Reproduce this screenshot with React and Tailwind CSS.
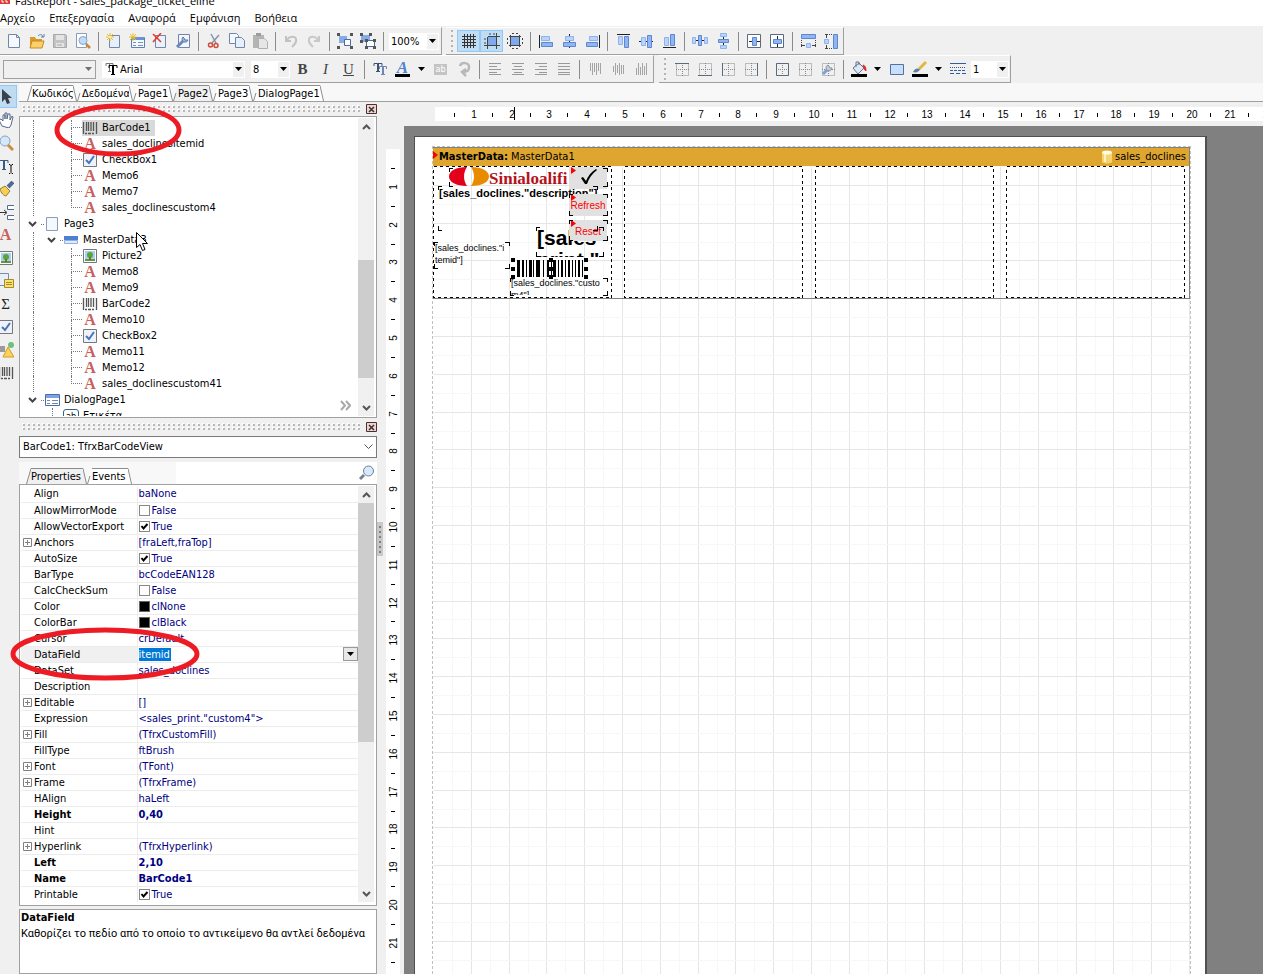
import React from 'react';
import clsx from 'clsx';

const line = '#5a6b80';

// 16x16 toolbar drawings
const icons = {
  file: (
    <path d="M2.5 1.5h8l3 3v10h-11z M10.500 1.500v3h3" fill="#f4f8ff" stroke="#7486a6" />
  ),
  open: (
    <>
      <path d="M1 4h5l1 2h6v9H1z" fill="#d99a2b" />
      <path d="M3 8h12l-2 7H1z" fill="#fbd06a" stroke="#c98a1d" />
      <path d="M9 3c2-2 4-2 5 1m1-3v3h-3" fill="none" stroke="#5e7fa8" />
    </>
  ),
  save: (
    <>
      <path d="M1.500 1.500h12l1 1v12h-13z" fill="#c4c4c4" stroke="#a8a8a8" />
      <path d="M4 2h8v5H4zM4 10h8v4H4z" fill="#e4e4e4" />
      <path d="M5 12h5" stroke="#a8a8a8" />
    </>
  ),
  preview: (
    <>
      <path d="M1.500.5h10v14h-10z" fill="#fff" stroke="#8c9cb8" />
      <circle cx="8" cy="7.500" r="4" fill="#bcdcf8" stroke="#86a7cc" />
      <path d="M11 11l4 4" stroke="#c98740" strokeWidth="2.500" />
    </>
  ),
  newPage: (
    <>
      <path d="M3.500 2.500h10v12h-10z" fill="#e6effd" stroke="#7486a6" />
      <path d="M4 0v8M0 4h8M1 1l6 6M7 1L1 7" stroke="#e8c02a" />
      <circle cx="4" cy="4" r="1.500" fill="#fff08a" />
    </>
  ),
  newDialog: (
    <>
      <path d="M2.500 4.500h13v10h-13z" fill="#f2f7ff" stroke="#5f7fb0" />
      <path d="M3 4h12v3H3z" fill="#6d93cf" />
      <path d="M4 9.500h3M4 12.500h3M9 9.500h5M9 12.500h5" stroke="#7c93b5" />
      <path d="M4 0v8M0 4h8M1 1l6 6M7 1L1 7" stroke="#e8c02a" />
    </>
  ),
  deletePage: (
    <>
      <path d="M3.500 2.500h10v12h-10z" fill="#eaf1fd" stroke="#7486a6" />
      <path d="M1 1l8 8M9 0L1 9" stroke="#e03a2a" strokeWidth="1.500" />
    </>
  ),
  pageSettings: (
    <>
      <path d="M3.500 1.500h11v13h-11z" fill="#f2f7ff" stroke="#7486a6" />
      <path d="M2 14l6-6" stroke="#6a88bd" strokeWidth="3" />
      <path d="M8 4a3 3 0 1 0 5 3l-3 0-1-2z" fill="#9db4dc" stroke="#5b78ab" />
    </>
  ),
  cut: (
    <>
      <path d="M5 1l5 9M13 2L6 10" stroke="#8295ad" strokeWidth="1.500" />
      <circle cx="4.500" cy="12" r="2" fill="none" stroke="#d2493b" strokeWidth="1.500" />
      <circle cx="10" cy="12.500" r="2" fill="none" stroke="#d2493b" strokeWidth="1.500" />
    </>
  ),
  copy: (
    <>
      <path d="M.5.5h7l2 2v8h-9z" fill="#f4f8ff" stroke="#7486a6" />
      <path d="M6.500 4.500h6l3 3v7h-9z" fill="#e6effd" stroke="#7486a6" />
    </>
  ),
  paste: (
    <>
      <path d="M1 2h11v13H1z" fill="#b4b4b4" />
      <path d="M4 0h5v3H4z" fill="#9c9c9c" />
      <path d="M6.500 5.500h6l3 3v7h-9z" fill="#e6e6e6" stroke="#b0b0b0" />
    </>
  ),
  undo: (
    <path d="M3 3v5h5M4 7c2-4 8-4 9-1 1 3-1 5-4 8" fill="none" stroke="#c2c2c2" strokeWidth="2" />
  ),
  redo: (
    <path d="M13 3v5H8M12 7C10 3 4 3 3 6c-1 3 1 5 4 8" fill="none" stroke="#c8c8c8" strokeWidth="2" />
  ),
  group: (
    <>
      <path d="M2 3h8v7H2z" fill="#86abe8" />
      <path d="M7.500 6.500h6v6h-6z" fill="#fff" stroke="#4a6aa0" />
      <path d="M0 0h3v3H0zM13 0h3v3h-3zM0 13h3v3H0zM13 13h3v3h-3z" fill="#555" />
    </>
  ),
  ungroup: (
    <>
      <path d="M1 2h9v7H1z" fill="#86abe8" />
      <path d="M6.500 7.500h8v6h-8z" fill="#fff" stroke="#4a6aa0" />
      <path d="M0 0h3v3H0zM9 0h3v3H9zM0 7h3v3H0zM5 6h3v3H5zM13 6h3v3h-3zM5 13h3v3H5zM13 13h3v3h-3z" fill="#555" />
    </>
  ),
  grid: <path d="M3.500 1v14M6.500 1v14M9.500 1v14M12.500 1v14M1 3.500h14M1 6.500h14M1 9.500h14M1 12.500h14" stroke="#333" />,
  snap: (
    <>
      <path d="M4 4h8v8H4z" fill="#7faaf0" />
      <path d="M3.500 4v12M12.500 0v16M4 3.500h12M0 12.500h16" stroke="#444" />
      <path d="M1 5v7M5 1h6" stroke="#444" strokeDasharray="2 2" />
    </>
  ),
  snapAll: (
    <>
      <path d="M4 4h8v8H4z" fill="#7faaf0" />
      <path d="M3.500 2v12M12.500 2v12M2 3.500h12M2 12.500h12" stroke="#444" />
      <path d="M.5 5v7M5 .5h6M15.500 5v7M5 15.500h6" stroke="#444" strokeDasharray="2 2" />
    </>
  ),
  alignLeft: (
    <>
      <path d="M1.500 2v13" stroke="#222" />
      <path d="M3.500 3.500h8v4h-8z" fill="#b9d3fb" stroke="#8db2ee" />
      <path d="M3.500 9.500h11v4h-11z" fill="#8fb5f5" stroke="#5d87cf" />
    </>
  ),
  alignCenter: (
    <>
      <path d="M8.500 1v14" stroke="#222" />
      <path d="M4.500 3.500h8v4h-8z" fill="#b9d3fb" stroke="#8db2ee" />
      <path d="M2.500 9.500h12v4h-12z" fill="#8fb5f5" stroke="#5d87cf" />
    </>
  ),
  alignRight: (
    <>
      <path d="M15.500 2v13" stroke="#222" />
      <path d="M5.500 3.500h8v4h-8z" fill="#b9d3fb" stroke="#8db2ee" />
      <path d="M2.500 9.500h11v4h-11z" fill="#8fb5f5" stroke="#5d87cf" />
    </>
  ),
  alignTop: (
    <>
      <path d="M2 1.500h13" stroke="#222" />
      <path d="M3.500 3.500h4v8h-4z" fill="#b9d3fb" stroke="#8db2ee" />
      <path d="M9.500 3.500h4v11h-4z" fill="#8fb5f5" stroke="#5d87cf" />
    </>
  ),
  alignMiddle: (
    <>
      <path d="M1 8.500h14" stroke="#222" />
      <path d="M3.500 4.500h4v8h-4z" fill="#b9d3fb" stroke="#8db2ee" />
      <path d="M9.500 2.500h4v12h-4z" fill="#8fb5f5" stroke="#5d87cf" />
    </>
  ),
  alignBottom: (
    <>
      <path d="M2 14.500h13" stroke="#222" />
      <path d="M3.500 4.500h4v8h-4z" fill="#b9d3fb" stroke="#8db2ee" />
      <path d="M9.500 1.500h4v11h-4z" fill="#8fb5f5" stroke="#5d87cf" />
    </>
  ),
  spaceH: (
    <>
      <path d="M0 7.500h16" stroke="#222" />
      <path d="M.5 4.500h3v6h-3zM12.500 4.500h3v6h-3z" fill="#b9d3fb" stroke="#8db2ee" />
      <path d="M6.500 2.500h3v10h-3z" fill="#8fb5f5" stroke="#5d87cf" />
    </>
  ),
  spaceV: (
    <>
      <path d="M8.500 0v16" stroke="#222" />
      <path d="M5.500.5h6v3h-6zM5.500 12.500h6v3h-6z" fill="#b9d3fb" stroke="#8db2ee" />
      <path d="M3.500 6.500h10v3h-10z" fill="#8fb5f5" stroke="#5d87cf" />
    </>
  ),
  centerH: (
    <>
      <path d="M1.500 1.500h13v13h-13z" fill="#fff" stroke={line} />
      <path d="M3 8.500h11" stroke="#222" />
      <path d="M6.500 4.500h4v8h-4z" fill="#8fb5f5" stroke="#5d87cf" />
    </>
  ),
  centerV: (
    <>
      <path d="M1.500 1.500h13v13h-13z" fill="#fff" stroke={line} />
      <path d="M8.500 3v11" stroke="#222" />
      <path d="M4.500 6.500h8v4h-8z" fill="#8fb5f5" stroke="#5d87cf" />
    </>
  ),
  sameWidth: (
    <>
      <path d="M1.500 1.500h14v4h-14z" fill="#8fb5f5" stroke="#5d87cf" />
      <path d="M1.500 7v7M15.500 7v7" stroke="#444" strokeDasharray="1 1" />
      <path d="M1 12.500h4M12 12.500h4" stroke="#444" />
      <path d="M6.500 10.500h4v4h-4z" fill="#b9d3fb" stroke="#8db2ee" />
    </>
  ),
  sameHeight: (
    <>
      <path d="M10.500 1.500h4v14h-4z" fill="#8fb5f5" stroke="#5d87cf" />
      <path d="M2 1.500h7M2 15.500h7" stroke="#444" strokeDasharray="1 1" />
      <path d="M3.500 1v4M3.500 12v4" stroke="#444" />
      <path d="M1.500 6.500h4v4h-4z" fill="#b9d3fb" stroke="#8db2ee" />
    </>
  ),
  rotate: (
    <path d="M4 5c1-4 9-4 9 1 0 4-2 5-6 5m3-3l-4 3 4 4" fill="none" stroke="#b8b8b8" strokeWidth="2.500" />
  ),
  textLeft: <path d="M2 2.500h12M2 5.500h8M2 8.500h12M2 11.500h8M2 13.500h12" stroke="#999" />,
  textCenter: <path d="M2 2.500h12M4 5.500h8M2 8.500h12M4 11.500h8M2 13.500h12" stroke="#999" />,
  textRight: <path d="M2 2.500h12M6 5.500h8M2 8.500h12M6 11.500h8M2 13.500h12" stroke="#999" />,
  textBlock: <path d="M2 2.500h12M2 5.500h12M2 8.500h12M2 11.500h12M2 13.500h12" stroke="#999" />,
  vTop: <path d="M3.500 2v8M5.500 2v12M7.500 2v9M9.500 2v12M11.500 2v8M13.500 2v11" stroke="#a4a4a4" />,
  vMiddle: <path d="M3.500 5v6M5.500 2v12M7.500 4v8M9.500 2v12M11.500 4v9M13.500 4v9" stroke="#a4a4a4" />,
  vBottom: <path d="M3.500 7v7M5.500 2v12M7.500 6v8M9.500 2v12M11.500 5v9M13.500 2v12" stroke="#a4a4a4" />,
  fill: (
    <>
      <path d="M2 7l6-5 5 5-6 6z" fill="#dbe8f8" stroke="#62748c" />
      <path d="M5 6V1h3v3" fill="none" stroke="#62748c" />
      <path d="M12 4c3 1 3 4 3 6l-2-2z" fill="#d8322a" stroke="#d8322a" />
      <path d="M0 13h16v3H0z" fill="#000" />
    </>
  ),
  rect: <path d="M1.500 3.500h13v10h-13z" fill="#c9ddfc" stroke="#51719f" />,
  pen: (
    <>
      <path d="M14 1L7 8" stroke="#e2b93c" strokeWidth="3" />
      <path d="M1 11c2-4 4-4 7-3-1 3-4 4-7 3z" fill="#5e7fa8" />
      <path d="M0 13h16v3H0z" fill="#000" />
    </>
  ),
  lineStyle: (
    <>
      <path d="M0 2.500h16" stroke="#365a9c" />
      <path d="M0 6.500h16" stroke="#365a9c" strokeDasharray="1 1" />
      <path d="M0 9.500h16" stroke="#365a9c" strokeDasharray="3 1" />
      <path d="M0 12.500h16" stroke="#365a9c" strokeDasharray="4 2" />
    </>
  ),
  arrow: <path d="M4 0v13l3-3 2 5 3-1-2-5h4z" fill="#3b3f46" />,
  hand: (
    <path d="M4 14L1 8l2-1 2 2V3h2v4V1h2v6l1-5h2v6l2-4 1 1-2 8-2 3z" fill="#fff" stroke="#55678a" />
  ),
  zoom: (
    <>
      <circle cx="7" cy="6" r="5" fill="#d4e8fb" stroke="#8aa0bb" />
      <path d="M10 10l5 5" stroke="#c98f3c" strokeWidth="3" />
    </>
  ),
  brush: (
    <>
      <path d="M10 6l5-5" stroke="#4d6b95" strokeWidth="4" />
      <path d="M2 8l5-3 5 5-4 5c-2 0-5-3-6-7z" fill="#f1d15a" stroke="#a07a28" />
    </>
  ),
  band: (
    <>
      <path d="M2 8.500h6M6 6l3 2.500L6 11" fill="none" stroke="#333" />
      <path d="M16 1.500H9.500v4H16M16 11.500H9.500v4H16" fill="#fff" stroke="#4d6b95" />
    </>
  ),
  picture: (
    <>
      <path d="M1.500 1.500h13v13h-13z" fill="#fff" stroke="#777" />
      <path d="M3 3h10v10H3z" fill="#a9cdf3" />
      <path d="M3 11h10v2H3z" fill="#5f9e3e" />
      <circle cx="8" cy="7" r="3" fill="#57a639" />
      <path d="M8 9v3" stroke="#7a4f22" strokeWidth="1.500" />
    </>
  ),
  subreport: (
    <>
      <path d="M.5.5h10v12H.5z" fill="#e8effc" stroke="#7d8ba5" />
      <path d="M6.500 6.500h9v8h-9z" fill="#fbe36b" stroke="#a8892c" />
      <path d="M8 9.500h6M8 11.500h6" stroke="#a8892c" />
    </>
  ),
  check: (
    <>
      <path d="M1.500 1.500h13v13h-13z" fill="#eef3fb" stroke="#777" />
      <path d="M4 8l3 3 5-7" fill="none" stroke="#4a72b8" strokeWidth="2" />
    </>
  ),
  shapes: (
    <>
      <path d="M1 4h6v6H1z" fill="#9a9a9a" />
      <circle cx="13" cy="3" r="3" fill="#6fc07b" />
      <path d="M10 5l6 10H5z" fill="#fbd35a" stroke="#d39d22" />
    </>
  ),
  barcode: (
    <path d="M1.500 2v12M4.500 2v9M6.500 2v9M9 2v9M11.500 2v9M14.500 2v12M3 13.500h2M6 13.500h3M10 13.500h2" stroke="#555" strokeWidth="1.300" />
  ),
  page: <path d="M2.500 1.500h11v13h-11z" fill="#f4f8ff" stroke="#8c9cb8" />,
  dataBand: (
    <>
      <path d="M1 4h14v4H1z" fill="#4f7fd0" />
      <path d="M1.500 8.500h13v3h-13z" fill="#dfeafc" stroke="#8fb0e4" />
    </>
  ),
  dialog: (
    <>
      <path d="M1.500 2.500h14v11h-14z" fill="#fff" stroke="#456fae" />
      <path d="M2 3h13v3H2z" fill="#7da3df" />
      <path d="M3 8.500h3M3 11.500h3M8 8.500h6M8 11.500h6" stroke="#7888a4" />
    </>
  ),
};

const frameEdges = {
  top: 'M1 2.500h14',
  bottom: 'M1 14.500h14',
  left: 'M2.500 2v13',
  right: 'M14.500 2v13',
  all: 'M2.500 2.500h12v12h-12z',
  none: '',
};

function Icon({ name }) {
  return (
    <svg width="16" height="16" viewBox="0 0 16 16" fill="none" className="shrink-0">
      {icons[name]}
    </svg>
  );
}

function FrameIcon({ edge, wrench }) {
  return (
    <svg width="16" height="16" viewBox="0 0 16 16" fill="none" className="shrink-0">
      <path d="M2.500 2.500h12v12h-12zM8.500 2v13M2 8.500h13" stroke="#888" strokeDasharray="1 1" />
      <path d={frameEdges[edge]} stroke={line} />
      {wrench && (
        <>
          <path d="M3 13l6-6" stroke="#7d9ddb" strokeWidth="3" />
          <path d="M8 4a3 3 0 1 0 4 3l-2 0-1-2z" fill="#c4ccd8" stroke="#8a94a4" />
        </>
      )}
    </svg>
  );
}

function LetterA() {
  return <span className="w-4 text-center font-['Liberation_Serif',serif] text-[16px] leading-[18px] font-bold text-[#c9605e]">A</span>;
}

function ToolButton({ label, on, children }) {
  return (
    <button
      type="button"
      aria-label={label}
      className={clsx('flex h-[22px] w-[23px] shrink-0 items-center justify-center', on && 'border border-[#90c8f6] bg-[#c0dcf3]')}
    >
      {children}
    </button>
  );
}

function IconButtons({ names, on = [] }) {
  return names.map((name) => (
    <ToolButton key={name} label={name} on={on.includes(name)}>
      <Icon name={name} />
    </ToolButton>
  ));
}

function Separator() {
  return (
    <div className="flex w-2 shrink-0 justify-center">
      <div className="h-[19px] w-px bg-[#8c8c8c]" />
    </div>
  );
}

function DownArrow() {
  return (
    <svg width="7" height="4" viewBox="0 0 7 4" className="shrink-0">
      <path d="M0 0h7L3.500 4z" fill="currentColor" />
    </svg>
  );
}

function DropButton({ label }) {
  return (
    <button type="button" aria-label={label} className="flex h-[22px] w-[15px] shrink-0 items-center justify-center">
      <DownArrow />
    </button>
  );
}

function Combo({ label, value, className, icon }) {
  return (
    <div className={clsx('relative flex h-[17px] shrink-0 items-center bg-white', className)}>
      {icon}
      <select aria-label={label} className="h-full w-full appearance-none bg-transparent pt-px pl-[2px] outline-none">
        <option>{value}</option>
      </select>
      <span className="pointer-events-none absolute inset-y-px right-px flex w-[11px] items-center justify-center bg-[#f0f0f0]">
        <DownArrow />
      </span>
    </div>
  );
}

function Bar({ className, grip, children }) {
  return (
    <div className={clsx('flex h-7 shrink-0 items-center border-t border-r border-b border-t-white border-r-[#a0a0a0] border-b-[#a0a0a0]', className)}>
      {grip && (
        <div className="flex w-[11px] shrink-0 flex-col items-center gap-[3px]">
          {[0, 1, 2, 3, 4].map((i) => (
            <span key={i} className="size-[2px] bg-[#b4b4b4]" />
          ))}
        </div>
      )}
      {children}
    </div>
  );
}

function Toolbars() {
  return (
    <div className="bg-[#f0f0f0] pt-px">
      <div className="flex gap-1">
        <Bar className="w-[442px] pl-[2px]">
          <IconButtons names={['file', 'open', 'save', 'preview']} />
          <Separator />
          <IconButtons names={['newPage', 'newDialog', 'deletePage', 'pageSettings']} />
          <Separator />
          <IconButtons names={['cut', 'copy', 'paste']} />
          <Separator />
          <IconButtons names={['undo', 'redo']} />
          <Separator />
          <IconButtons names={['group', 'ungroup']} />
          <Separator />
          <Combo label="Zoom" value="100%" className="ml-[2px] w-[50px]" />
        </Bar>
        <Bar grip className="w-[398px]">
          <IconButtons names={['grid', 'snap', 'snapAll']} on={['grid', 'snap']} />
          <Separator />
          <IconButtons names={['alignLeft', 'alignCenter', 'alignRight']} />
          <Separator />
          <IconButtons names={['alignTop', 'alignMiddle', 'alignBottom']} />
          <Separator />
          <IconButtons names={['spaceH', 'spaceV']} />
          <Separator />
          <IconButtons names={['centerH', 'centerV']} />
          <Separator />
          <IconButtons names={['sameWidth', 'sameHeight']} />
        </Bar>
      </div>

      <div className="flex gap-[5px]">
        <Bar className="w-[654px] pl-[3px]">
          <div className="relative h-[19px] w-[93px] shrink-0 border border-[#a0a0a0]">
            <select aria-label="Style" disabled className="h-full w-full appearance-none" />
            <span className="pointer-events-none absolute inset-y-0 right-[3px] flex items-center text-[#707070]">
              <DownArrow />
            </span>
          </div>
          <Combo
            label="Font"
            value="Arial"
            className="ml-[6px] w-[143px]"
            icon={
              <svg width="13" height="14" viewBox="0 0 13 14" fill="none" className="ml-[3px] shrink-0">
                <path d="M1 4V1.500h7V4M4.500 2v7M3 9.500h3" stroke="#777" />
                <path d="M4 6V3.500h8V6M6 12.500h4" stroke="#000" />
                <path d="M8 4v8" stroke="#000" strokeWidth="2" />
              </svg>
            }
          />
          <Combo label="Size" value="8" className="ml-[6px] w-[39px]" />
          <div className="ml-px flex font-['Liberation_Serif',serif] text-[15px] text-[#444]">
            <ToolButton label="Bold"><b>B</b></ToolButton>
            <ToolButton label="Italic"><i>I</i></ToolButton>
            <ToolButton label="Underline"><u>U</u></ToolButton>
          </div>
          <Separator />
          <ToolButton label="Font settings">
            <svg width="14" height="14" viewBox="0 0 14 14" fill="none">
              <path d="M1 4V1.500h8V4M3 9.500h4" stroke="#3a5378" />
              <path d="M5 2v8" stroke="#3a5378" strokeWidth="2" />
              <path d="M6.500 7V4.500h7V7M8 12.500h4" stroke="#6d86b4" />
              <path d="M10 5v8" stroke="#6d86b4" strokeWidth="2" />
            </svg>
          </ToolButton>
          <ToolButton label="Font color">
            <span className="w-[15px] border-b-3 border-black text-center font-['Liberation_Serif',serif] text-[17px] leading-[13px] font-bold text-[#4e83d2] italic">A</span>
          </ToolButton>
          <DropButton label="Font color list" />
          <ToolButton label="Highlight">
            <span className="h-[11px] w-[13px] bg-[#c4c4c4] text-center text-[9px] leading-[10px] text-white">ab</span>
          </ToolButton>
          <IconButtons names={['rotate']} />
          <Separator />
          <IconButtons names={['textLeft', 'textCenter', 'textRight', 'textBlock']} />
          <Separator />
          <IconButtons names={['vTop', 'vMiddle', 'vBottom']} />
        </Bar>
        <Bar grip className="w-[352px]">
          {['top', 'bottom', 'left', 'right'].map((edge) => (
            <ToolButton key={edge} label={edge}><FrameIcon edge={edge} /></ToolButton>
          ))}
          <Separator />
          <ToolButton label="All lines"><FrameIcon edge="all" /></ToolButton>
          <ToolButton label="No lines"><FrameIcon edge="none" /></ToolButton>
          <ToolButton label="Edit frame"><FrameIcon edge="none" wrench /></ToolButton>
          <Separator />
          <IconButtons names={['fill']} />
          <DropButton label="Fill color list" />
          <IconButtons names={['rect', 'pen']} />
          <DropButton label="Line color list" />
          <IconButtons names={['lineStyle']} />
          <Combo label="Line width" value="1" className="ml-[2px] w-[38px]" />
        </Bar>
      </div>
    </div>
  );
}

function Tab({ label, active, first, width }) {
  const fill = active ? '#f0f0f0' : '#fff';
  return (
    <button type="button" className="flex h-4 shrink-0">
      <svg width="5" height="16" viewBox="0 0 5 16">
        <path d="M0 16L5 0v16z" fill={fill} />
        <path d={first ? 'M.5 16L5 .5' : 'M.5 16L3 8'} stroke="#8c8c8c" fill="none" />
      </svg>
      <span className={clsx('border-t border-[#8c8c8c] text-left leading-4 whitespace-nowrap', width, active ? 'bg-[#f0f0f0]' : 'bg-white')}>
        {label}
      </span>
      <svg width="4" height="16" viewBox="0 0 4 16">
        <path d="M0 0l4 16H0z" fill={fill} />
        <path d="M0 .5L3.500 16" stroke="#8c8c8c" fill="none" />
      </svg>
    </button>
  );
}

function Tools() {
  return (
    <div className="flex w-[17px] shrink-0 flex-col items-end overflow-hidden pt-[2px]">
      {['arrow', 'hand', 'zoom', 'text', 'brush', 'band', 'memo', 'picture', 'subreport', 'sum', 'check', 'shapes', 'barcode'].map((name) => (
        <button
          key={name}
          type="button"
          aria-label={name}
          className={clsx('flex h-[23px] w-[23px] shrink-0 items-center justify-center', name === 'arrow' && 'border border-[#90c8f6] bg-[#c0dcf3]')}
        >
          {name === 'text' && (
            <svg width="16" height="16" viewBox="0 0 16 16" fill="none">
              <path d="M1 5V2.500h9V5M4 11.500h4" stroke="#2f6088" />
              <path d="M6 3v9" stroke="#2f6088" strokeWidth="2" />
              <path d="M11 6.500h1l1 1 1-1h1M13 7v7M11 15.500h1l1-1 1 1h1" stroke="#000" />
            </svg>
          )}
          {name === 'memo' && <LetterA />}
          {name === 'sum' && <span className="font-['Liberation_Serif',serif] text-[15px] leading-4 text-[#222]">Σ</span>}
          {icons[name] && <Icon name={name} />}
        </button>
      ))}
    </div>
  );
}

function PanelGrip({ className, id }) {
  return (
    <div className={clsx('flex shrink-0 items-center justify-between pl-[3px]', className)}>
      <svg width="340" height="8" shapeRendering="crispEdges">
        <pattern id={id} width="5" height="4" patternUnits="userSpaceOnUse">
          <path d="M1 1h2v2H1z" fill="#b8b8b8" />
          <path d="M0 0h2v1H1v1H0z" fill="#fff" />
        </pattern>
        <rect width="340" height="8" fill={`url(#${id})`} />
      </svg>
      <button type="button" aria-label="Close" className="flex">
        <svg width="11" height="10" viewBox="0 0 11 10">
          <path d="M.5.5h10v9H.5z" fill="#f3d3cf" stroke="#4a3030" />
          <path d="M3 3l5 5M8 3L3 8" stroke="#333" strokeWidth="1.500" />
        </svg>
      </button>
    </div>
  );
}

function Chevron({ up, className }) {
  return (
    <svg width="9" height="6" viewBox="0 0 9 6" fill="none" className={className}>
      <path d={up ? 'M1 5l3.500-3.500L8 5' : 'M1 1l3.500 3.500L8 1'} stroke="currentColor" strokeWidth="2" />
    </svg>
  );
}

function ScrollBar({ thumb }) {
  return (
    <div className="flex w-4 shrink-0 flex-col bg-[#f0f0f0] text-[#555]">
      <button type="button" aria-label="Scroll up" className="flex h-[17px] items-center justify-center"><Chevron up /></button>
      <div className="min-h-0 flex-1">
        <div className={clsx('bg-[#cdcdcd]', thumb)} />
      </div>
      <button type="button" aria-label="Scroll down" className="flex h-[17px] items-center justify-center"><Chevron /></button>
    </div>
  );
}

const tree = [
  { label: 'BarCode1', icon: 'barcode', selected: true },
  { label: 'sales_doclinesitemid', icon: 'memo' },
  { label: 'CheckBox1', icon: 'check' },
  { label: 'Memo6', icon: 'memo' },
  { label: 'Memo7', icon: 'memo' },
  { label: 'sales_doclinescustom4', icon: 'memo', last: true },
  { label: 'Page3', icon: 'page', level: 0 },
  { label: 'MasterData3', icon: 'dataBand', level: 1 },
  { label: 'Picture2', icon: 'picture' },
  { label: 'Memo8', icon: 'memo' },
  { label: 'Memo9', icon: 'memo' },
  { label: 'BarCode2', icon: 'barcode' },
  { label: 'Memo10', icon: 'memo' },
  { label: 'CheckBox2', icon: 'check' },
  { label: 'Memo11', icon: 'memo' },
  { label: 'Memo12', icon: 'memo' },
  { label: 'sales_doclinescustom41', icon: 'memo', last: true },
  { label: 'DialogPage1', icon: 'dialog', level: 0 },
  { label: 'Ετικέτα', icon: 'label', level: 3 },
];

function TreeRow({ label, icon, level = 2, last, selected }) {
  return (
    <li className="flex h-4 items-center">
      {level === 2 && (
        <>
          <span className="ml-3 h-4 w-[38px] border-l border-dotted border-[#777]" />
          <span className="flex h-4 w-[11px] flex-col">
            <span className="h-2 border-b border-l border-dotted border-[#777]" />
            {!last && <span className="h-2 border-l border-dotted border-[#777]" />}
          </span>
        </>
      )}
      {level === 0 && (
        <>
          <Chevron className="ml-[7px] text-[#444]" />
          <span className="ml-1 w-[3px] border-b border-dotted border-[#777]" />
        </>
      )}
      {level === 1 && (
        <>
          <span className="ml-3 h-4 w-[14px] border-l border-dotted border-[#777]" />
          <Chevron className="text-[#444]" />
          <span className="ml-[4px] w-[3px] border-b border-dotted border-[#777]" />
        </>
      )}
      {level === 3 && <span className="ml-[31px] h-4 w-[11px] border-l border-dotted border-[#777]" />}
      <span className={clsx('flex h-4 items-center', selected && 'bg-[#d9d9d9]')}>
        {icon === 'memo' && <LetterA />}
        {icon === 'label' && (
          <span className="h-[14px] w-4 rounded-[3px] border border-[#35618e] text-center text-[9px] leading-3">ab</span>
        )}
        {icons[icon] && <Icon name={icon} />}
        <span className="px-1 whitespace-nowrap">{label}</span>
      </span>
    </li>
  );
}

const props = [
  { name: 'Align', value: 'baNone' },
  { name: 'AllowMirrorMode', value: 'False', check: false },
  { name: 'AllowVectorExport', value: 'True', check: true },
  { name: 'Anchors', value: '[fraLeft,fraTop]', group: true },
  { name: 'AutoSize', value: 'True', check: true },
  { name: 'BarType', value: 'bcCodeEAN128' },
  { name: 'CalcCheckSum', value: 'False', check: false },
  { name: 'Color', value: 'clNone', swatch: true },
  { name: 'ColorBar', value: 'clBlack', swatch: true },
  { name: 'Cursor', value: 'crDefault' },
  { name: 'DataField', value: 'itemid', editing: true },
  { name: 'DataSet', value: 'sales_doclines' },
  { name: 'Description', value: '' },
  { name: 'Editable', value: '[]', group: true },
  { name: 'Expression', value: '<sales_print."custom4">' },
  { name: 'Fill', value: '(TfrxCustomFill)', group: true },
  { name: 'FillType', value: 'ftBrush' },
  { name: 'Font', value: '(TFont)', group: true },
  { name: 'Frame', value: '(TfrxFrame)', group: true },
  { name: 'HAlign', value: 'haLeft' },
  { name: 'Height', value: '0,40', bold: true },
  { name: 'Hint', value: '' },
  { name: 'Hyperlink', value: '(TfrxHyperlink)', group: true },
  { name: 'Left', value: '2,10', bold: true },
  { name: 'Name', value: 'BarCode1', bold: true },
  { name: 'Printable', value: 'True', check: true },
];

function PropertyValue({ prop }) {
  if (prop.editing) {
    return (
      <span className="flex h-[15px] items-center justify-between">
        <input aria-label={prop.name} defaultValue={prop.value} className="h-[13px] w-8 bg-[#0078d7] text-white outline-none" />
        <button type="button" aria-label="Fields" className="flex h-[14px] w-[15px] items-center justify-center border border-[#999] bg-[#e8e8e8] text-black">
          <DownArrow />
        </button>
      </span>
    );
  }
  if (prop.check !== undefined) {
    return (
      <label className="flex h-[15px] items-center gap-[2px]">
        <span className="relative flex">
          <input type="checkbox" defaultChecked={prop.check} className="peer size-[11px] appearance-none border border-[#888] bg-white" />
          <svg width="11" height="11" viewBox="0 0 11 11" fill="none" className="pointer-events-none absolute inset-0 hidden peer-checked:block">
            <path d="M2.500 5l2 2.500L8.500 3" stroke="#000" strokeWidth="2" />
          </svg>
        </span>
        {prop.value}
      </label>
    );
  }
  if (prop.swatch) {
    return (
      <span className="flex h-[15px] items-center gap-[2px]">
        <span className="size-[11px] border border-[#666] bg-black" />
        {prop.value}
      </span>
    );
  }
  return prop.value;
}

function Inspector() {
  return (
    <div className="flex min-h-0 flex-1 border border-[#a0a0a0] bg-white pt-px pr-[2px] pb-[3px] pl-px">
      <div className="min-w-0 flex-1 overflow-hidden">
        <table className="w-full table-fixed border-collapse">
          <tbody>
            {props.map((prop) => (
              <tr key={prop.name} className={clsx('h-4 border-b border-[#ececec] leading-[15px]', prop.bold && 'font-bold')}>
                <td className={clsx('w-[116px] border-r border-[#ececec] p-0', prop.editing && 'bg-[#f0f0f0]')}>
                  <span className="flex h-[15px] items-center">
                    <span className="flex w-[13px] pl-[2px]">
                      {prop.group && (
                        <svg width="9" height="9" viewBox="0 0 9 9" fill="none">
                          <path d="M.5.5h8v8h-8zM2 4.500h5M4.500 2v5" stroke="#808080" />
                        </svg>
                      )}
                    </span>
                    {prop.name}
                  </span>
                </td>
                <td className="p-0 pl-px text-[#000080]"><PropertyValue prop={prop} /></td>
              </tr>
            ))}
          </tbody>
        </table>
      </div>
      <ScrollBar thumb="h-[239px]" />
    </div>
  );
}

function SidePanels() {
  return (
    <div className="ml-[2px] flex w-[358px] shrink-0 flex-col">
      <PanelGrip id="treeGrip" className="h-[14px]" />
      <div className="relative flex h-[302px] shrink-0 border border-[#a0a0a0] bg-white p-px pr-[2px]">
        <ul className="min-w-0 flex-1 overflow-hidden pt-[2px]">
          {tree.map((row) => <TreeRow key={row.label} {...row} />)}
        </ul>
        <ScrollBar thumb="mt-[125px] h-[118px]" />
        <svg width="11" height="11" viewBox="0 0 11 11" fill="none" className="absolute right-[25px] bottom-[6px]">
          <path d="M1 1l4 4.500L1 10M6 1l4 4.500L6 10" stroke="#a8a8a8" strokeWidth="2" />
        </svg>
      </div>
      <PanelGrip id="objectGrip" className="h-[18px]" />
      <div className="relative shrink-0">
        <select aria-label="Object" className="block h-[22px] w-full appearance-none border border-[#7a7a7a] bg-white pl-[3px] outline-none">
          <option>BarCode1: TfrxBarCodeView</option>
        </select>
        <svg width="9" height="6" viewBox="0 0 9 6" fill="none" className="pointer-events-none absolute top-2 right-1">
          <path d="M.5.5l4 4 4-4" stroke="#555" />
        </svg>
      </div>
      <div className="mt-1 flex h-[22px] shrink-0 items-end bg-white">
        <div className="flex h-full w-[157px] items-end bg-[#f8f8f8] pl-[7px]">
          <Tab label="Properties" first active width="w-[52px]" />
          <Tab label="Events" width="w-[36px]" />
        </div>
        <button type="button" aria-label="Search" className="mr-[2px] ml-auto flex self-center">
          <svg width="16" height="16" viewBox="0 0 16 16" fill="none">
            <path d="M5 10l-4 4" stroke="#77808c" strokeWidth="3" />
            <circle cx="9.500" cy="6" r="5" fill="#d6e9fd" stroke="#6d8296" />
          </svg>
        </button>
      </div>
      <Inspector />
      <div className="mt-[3px] h-[65px] shrink-0 border border-[#a0a0a0] bg-white pl-px leading-4">
        <p className="font-bold">DataField</p>
        <p className="font-['Roboto',sans-serif] whitespace-nowrap">Καθορίζει το πεδίο από το οποίο το αντικείμενο θα αντλεί δεδομένα</p>
      </div>
    </div>
  );
}

// pixels per centimetre of the design surface
const CM = 37.8;
const at = (cm) => Math.round(cm * CM);
const range = (n) => Array.from({ length: n }, (_, i) => i + 1);

function HorizontalRuler() {
  return (
    <svg height="14" className="block w-full bg-white font-['Liberation_Sans',sans-serif] text-[10px]">
      {range(22).map((n) => (
        <g key={n}>
          <rect x={at(n - 0.5)} y="6" width="1" height="4" />
          <text x={at(n) + 1} y="11" textAnchor="middle">{n}</text>
        </g>
      ))}
      <rect x="79" y="0" width="1" height="13" />
    </svg>
  );
}

function VerticalRuler() {
  return (
    <svg width="14" className="block h-full bg-white font-['Liberation_Sans',sans-serif] text-[10px]">
      {range(22).map((n) => (
        <g key={n}>
          <rect x="5" y={at(n - 0.5)} width="4" height="1" />
          <text transform={`translate(11 ${at(n)}) rotate(-90)`} textAnchor="middle">{n}</text>
        </g>
      ))}
    </svg>
  );
}

function GridLines() {
  return (
    <svg className="absolute inset-0 h-full w-full" shapeRendering="crispEdges">
      {range(20).map((n) => (
        <React.Fragment key={n}>
          <rect x={at(n - 0.5)} width="1" height="100%" fill="#f7f7f7" />
          <rect x={at(n)} width="1" height="100%" fill="#e6e6e6" />
        </React.Fragment>
      ))}
      {range(22).map((n) => (
        <React.Fragment key={n}>
          <rect y={at(n - 0.5)} width="100%" height="1" fill="#f7f7f7" />
          <rect y={at(n)} width="100%" height="1" fill="#e6e6e6" />
        </React.Fragment>
      ))}
    </svg>
  );
}

// corner marks round an object on the band
function Corners({ x, y, w, h }) {
  const r = x + w;
  const b = y + h;
  return (
    <path
      d={`M${x} ${y + 4}V${y}H${x + 4}M${r - 4} ${y}H${r}V${y + 4}M${r} ${b - 4}V${b}H${r - 4}M${x + 4} ${b}H${x}V${b - 4}`}
      fill="none"
      stroke="#000"
    />
  );
}

const bars = [
  [0, 3], [5, 2], [9, 1], [12, 3], [16, 1], [19, 4], [26, 1], [30, 2], [34, 1], [36, 3],
  [41, 1], [44, 2], [48, 1], [51, 2], [55, 1], [58, 1], [61, 2], [65, 1],
];

function FormButton({ label, className }) {
  return (
    <button type="button" className={clsx('absolute left-[136px] w-[38px] bg-[#e1e1e1] pt-[2px] text-center text-[10px] text-[#ff0000]', className)}>
      <svg width="5" height="7" viewBox="0 0 5 7" className="absolute top-0 left-[2px]">
        <path d="M0 0l5 3.500L0 7z" fill="#f00" />
      </svg>
      {label}
    </button>
  );
}

function Band() {
  return (
    <div className="relative">
      <div className="flex h-[19px] items-center border-t border-r border-[#808080] bg-[#dfa62f] pr-[3px]">
        <svg width="6" height="9" viewBox="0 0 6 9" className="mb-1 shrink-0">
          <path d="M0 0l5 4-5 4z" fill="#f00" />
        </svg>
        <b>MasterData:</b>
        <span className="ml-[3px]">MasterData1</span>
        <svg width="12" height="14" viewBox="0 0 12 14" className="mr-[2px] ml-auto">
          <path d="M1 2h10v10c-2 2-8 2-10 0z" fill="#f6d372" />
          <path d="M3 4h2v8H3z" fill="#fff3c0" />
          <ellipse cx="6" cy="2.500" rx="5" ry="2" fill="#fffbe6" />
        </svg>
        <span>sales_doclines</span>
      </div>

      <div className="relative h-[133px] border-r border-b border-[#808080] font-['Liberation_Sans',sans-serif] text-black">
        <svg className="absolute inset-0 h-full w-full" shapeRendering="crispEdges" fill="none">
          {[0, 191, 382, 573].map((x) => (
            <rect key={x} x={x + 0.5} y="0.5" width="178" height="131" stroke="#000" strokeDasharray="3 3" />
          ))}
        </svg>

        {/* Logo */}
        <svg width="40" height="20" viewBox="0 0 40 20" className="absolute top-px left-[16px]">
          <path d="M18 0C7 0 0 4 0 9.500S7 19 18 19c-4-6-4-13 0-19z" fill="#e2001a" />
          <path d="M22 0c11 0 18 4 18 9.500S33 19 22 19c4-6 4-13 0-19z" fill="#e98b00" />
        </svg>
        <span className="absolute top-[3px] left-[56px] h-5 w-20 overflow-hidden font-['Liberation_Serif',serif] text-[17px] leading-5 font-bold whitespace-nowrap text-[#b5121b]">
          Sinialoalifi
        </span>

        <span className="absolute top-5 left-[6px] text-[11px] leading-[14px] font-bold">[sales_doclines."description"]</span>
        <span className="absolute top-[76px] left-[2px] w-[71px] text-[9px] leading-3 break-all">[sales_doclines."itemid"]</span>
        <span className="absolute top-[61px] left-[104px] h-[30px] w-[70px] overflow-hidden text-[21px] leading-[22px] font-bold">
          [sales print."
        </span>

        <svg width="80" height="22" viewBox="0 0 80 22" className="absolute top-[92px] left-[77px]" shapeRendering="crispEdges">
          {bars.map(([x, w]) => <rect key={x} x={x + 7} y="2" width={w} height="17" />)}
          {[1, 39, 74].map((x) => (
            <path key={x} d={`M${x} 0h4v4h-4zM${x} 9h4v4h-4zM${x} 17h4v4h-4z`} />
          ))}
        </svg>
        <span className="absolute top-[111px] left-[78px] h-[18px] w-24 overflow-hidden text-[9px] leading-3 break-all">
          [sales_doclines."custom4"]
        </span>

        <FormButton label="" className="top-px h-[22px]" />
        <FormButton label="Refresh" className="top-7 h-[22px]" />
        <FormButton label="Reset" className="top-[54px] h-[21px]" />
        <svg width="18" height="16" viewBox="0 0 18 16" fill="none" className="absolute top-[3px] left-[147px]">
          <path d="M1 9l2-1 3 4C8 7 11 3 16 0l1 1C12 5 9 9 7 15H5z" fill="#000" />
        </svg>

        <svg className="absolute inset-0 h-full w-full" shapeRendering="crispEdges">
          <Corners x={16} y={2} w={158} h={18} />
          <Corners x={5} y={20} w={159} h={44} />
          <Corners x={136} y={28} w={38} h={21} />
          <Corners x={136} y={54} w={38} h={20} />
          <Corners x={103} y={61} w={67} h={29} />
          <Corners x={1} y={76} w={75} h={26} />
          <Corners x={77} y={112} w={97} h={17} />
        </svg>
      </div>
    </div>
  );
}

function Designer() {
  return (
    <div className="flex min-w-0 flex-1 flex-col">
      <div className="h-6 shrink-0 pt-[5px] pl-[52px]"><HorizontalRuler /></div>
      <div className="flex min-h-0 flex-1">
        <div className="mr-1 ml-[3px] w-[14px] shrink-0 overflow-hidden pt-[23px]"><VerticalRuler /></div>
        <div className="min-w-0 flex-1 overflow-hidden bg-[#808080] pt-[10px] pl-[10px]">
          <div className="h-full w-[793px] border-t border-r-2 border-l border-[#505050] bg-white pt-[9px] pr-[14px] pl-[17px]">
            <div className="relative h-full border-t border-r border-l border-dashed border-[#c0c0c0]">
              <GridLines />
              <Band />
            </div>
          </div>
        </div>
      </div>
    </div>
  );
}

export default function App() {
  return (
    <div className="relative flex h-screen flex-col overflow-hidden bg-[#f0f0f0] font-['DejaVu_Sans_Condensed','Liberation_Sans',sans-serif] text-[11px] leading-4 text-black">
      <header className="h-[26px] shrink-0 overflow-hidden bg-white font-['Open_Sans',sans-serif]">
        <div className="flex h-[9px] items-end overflow-hidden">
          <svg width="10" height="5" viewBox="0 0 10 5" className="mr-[5px] mb-[5px] shrink-0">
            <path d="M0 0h10v5H0z" fill="#e03a3a" />
            <path d="M2 0v3h2M6 0v3h2" stroke="#fff" fill="none" />
          </svg>
          <span className="whitespace-nowrap">FastReport - sales_package_ticket_eline</span>
        </div>
        <nav className="flex gap-[14px] leading-[17px]">
          {['Αρχείο', 'Επεξεργασία', 'Αναφορά', 'Εμφάνιση', 'Βοήθεια'].map((item) => (
            <a key={item} href="#">{item}</a>
          ))}
        </nav>
      </header>

      <Toolbars />

      <div className="flex min-h-0 flex-1">
        <Tools />
        <div className="flex min-w-0 flex-1 flex-col">
          <div className="ml-[2px] flex h-[19px] shrink-0 items-end border-b border-[#a0a0a0] bg-[#f8f8f8] pl-2">
            <Tab label="Κωδικός" first width="w-[41px]" />
            <Tab label="Δεδομένα" width="w-[47px]" />
            <Tab label="Page1" width="w-[31px]" />
            <Tab label="Page2" active width="w-[31px]" />
            <Tab label="Page3" width="w-[31px]" />
            <Tab label="DialogPage1" width="w-[62px]" />
          </div>
          <div className="flex min-h-0 flex-1">
            <SidePanels />
            <div className="w-[6px] shrink-0 pt-[420px]">
              <div className="flex h-[34px] flex-col items-center justify-center gap-[3px] bg-[#c8c8c8]">
                {[0, 1, 2, 3, 4, 5].map((i) => <span key={i} className="size-[2px] bg-[#808080]" />)}
              </div>
            </div>
            <Designer />
          </div>
        </div>
      </div>

      {/* Red markers and the mouse pointer */}
      <svg width="128" height="54" viewBox="0 0 128 54" fill="none" className="pointer-events-none absolute top-[103px] left-[54px]">
        <ellipse cx="64" cy="27" rx="61" ry="24" stroke="#ed1c24" strokeWidth="5" />
      </svg>
      <svg width="190" height="54" viewBox="0 0 190 54" fill="none" className="pointer-events-none absolute top-[627px] left-[10px]">
        <ellipse cx="95" cy="27" rx="92" ry="24" stroke="#ed1c24" strokeWidth="5" />
      </svg>
      <svg width="12" height="19" viewBox="0 0 12 19" className="pointer-events-none absolute top-[232px] left-[136px]">
        <path d="M.5.5v15l3.500-3 2.500 6 2.500-1-2.500-6h5z" fill="#fff" stroke="#000" />
      </svg>
    </div>
  );
}
